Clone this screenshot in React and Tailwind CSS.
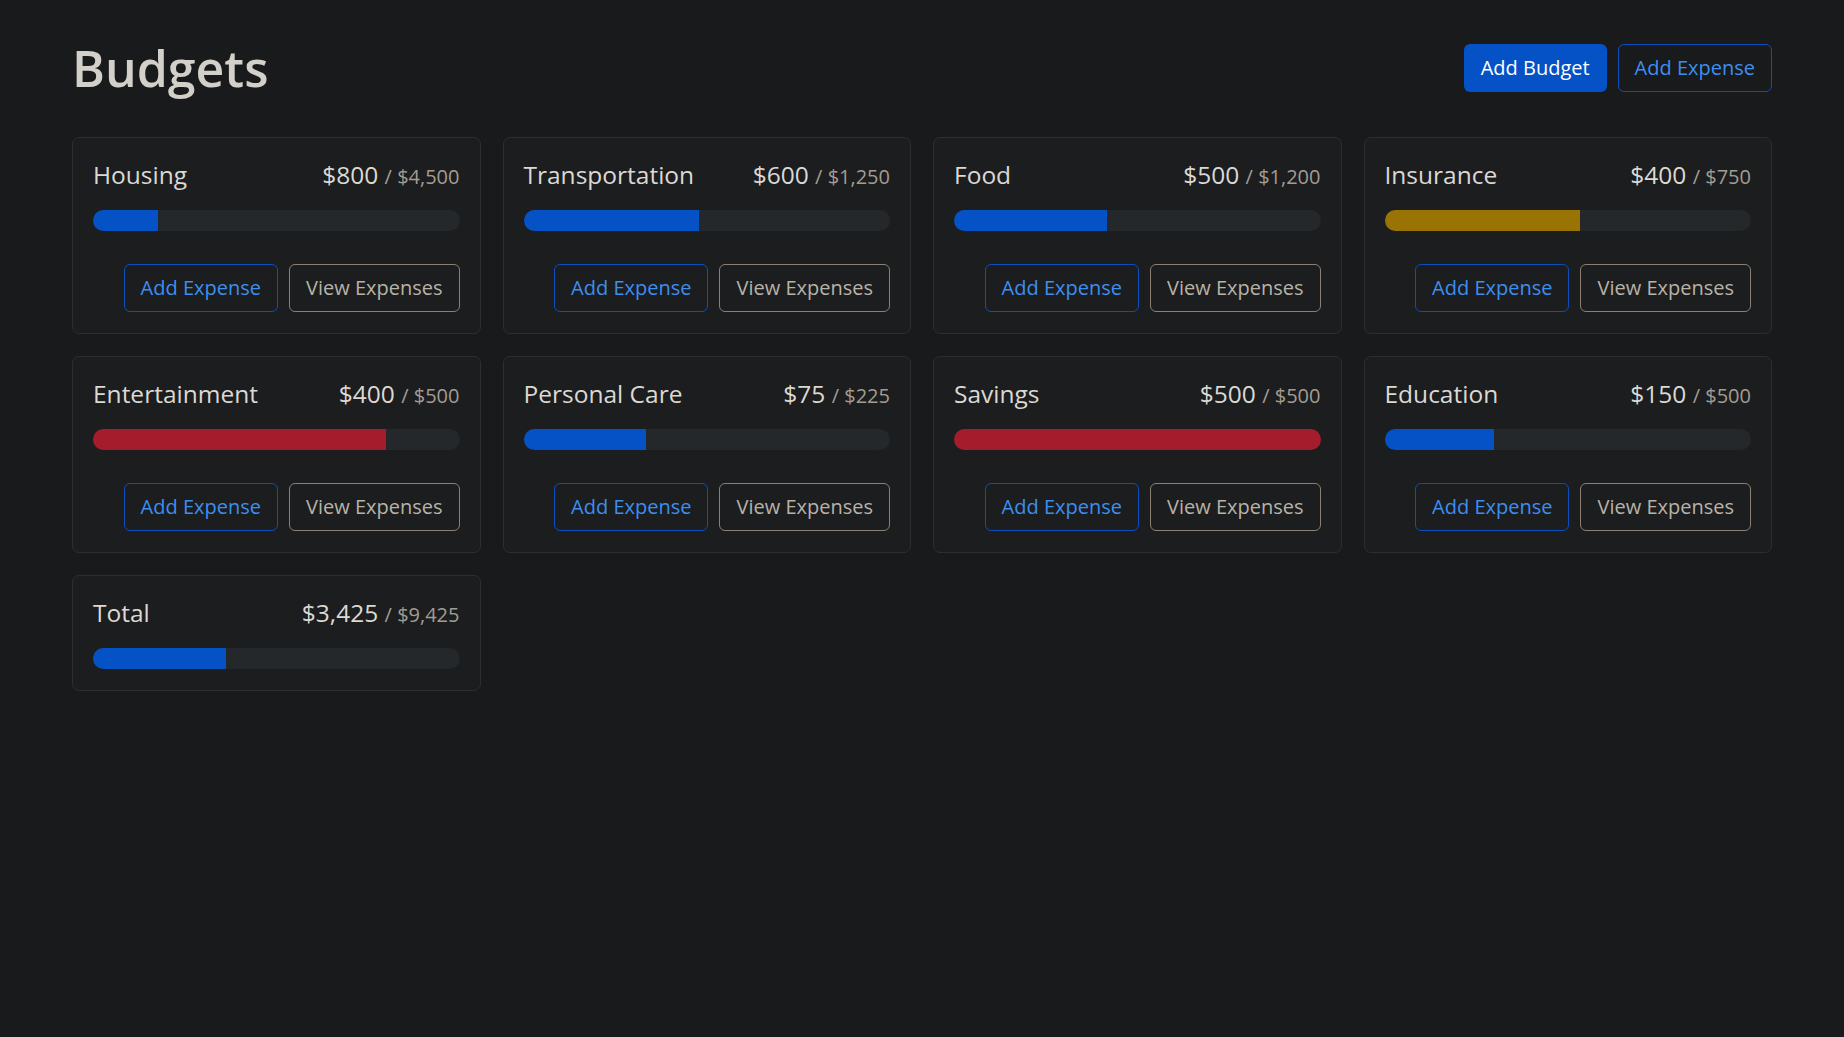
const budgets = [
  { name: "Housing", spent: 800, max: 4500 },
  { name: "Transportation", spent: 600, max: 1250 },
  { name: "Food", spent: 500, max: 1200 },
  { name: "Insurance", spent: 400, max: 750 },
  { name: "Entertainment", spent: 400, max: 500 },
  { name: "Personal Care", spent: 75, max: 225 },
  { name: "Savings", spent: 500, max: 500 },
  { name: "Education", spent: 150, max: 500 },
];

const fmt = (n) => "$" + n.toLocaleString("en-US");

function barColor(ratio) {
  if (ratio >= 0.75) return "bg-[#a51d2d]";
  if (ratio >= 0.5) return "bg-[#997404]";
  return "bg-[#0552c6]";
}

function BudgetCard({ name, spent, max, hideButtons = false }) {
  const ratio = spent / max;
  return (
    <div className="rounded-[7px] border border-[#2c2f31] bg-[#1b1d1f] px-[20px] pt-[21px] pb-[21px]">
      <div className="flex items-baseline justify-between">
        <h2 className="text-[24.5px] leading-[31px] text-[#dcd8d2]">{name}</h2>
        <div className="text-[24.5px] leading-[31px] text-[#dcd8d2]">
          {fmt(spent)}{" "}
          <span className="text-[20px] text-[#a49c91]">/ {fmt(max)}</span>
        </div>
      </div>
      <div className="mt-[18px] h-[21px] w-full overflow-hidden rounded-full bg-[#25282a]">
        <div className={`h-full ${barColor(ratio)}`} style={{ width: `${Math.min(100, ratio * 100)}%` }}></div>
      </div>
      {!hideButtons && (
        <div className="mt-[33px] flex justify-end gap-[11px]">
          <button className="h-[48px] rounded-[6px] border border-[#0b4fbf] px-[16px] text-[20px] text-[#3d8eef]">
            Add Expense
          </button>
          <button className="h-[48px] rounded-[6px] border border-[#8a8172] px-[16px] text-[20px] text-[#b9b2a7]">
            View Expenses
          </button>
        </div>
      )}
    </div>
  );
}

export default function App() {
  const totalSpent = budgets.reduce((a, b) => a + b.spent, 0);
  const totalMax = budgets.reduce((a, b) => a + b.max, 0);
  return (
    <div className="min-h-screen bg-[#181a1b] font-['Open_Sans',sans-serif]">
      <div className="px-[72px] pt-[44px]">
        <div className="flex items-center justify-between">
          <h1 className="text-[50px] font-semibold leading-[48px] text-[#d3cfc9]">Budgets</h1>
          <div className="flex gap-[11px]">
            <button className="h-[48px] rounded-[6px] bg-[#0452c5] px-[17px] text-[20px] text-white">
              Add Budget
            </button>
            <button className="h-[48px] rounded-[6px] border border-[#0b4fbf] px-[16px] text-[20px] text-[#3d8eef]">
              Add Expense
            </button>
          </div>
        </div>
        <div className="mt-[45px] grid grid-cols-4 gap-[22px] items-start">
          {budgets.map((b) => (
            <BudgetCard key={b.name} {...b} />
          ))}
          <BudgetCard name="Total" spent={totalSpent} max={totalMax} hideButtons />
        </div>
      </div>
    </div>
  );
}
